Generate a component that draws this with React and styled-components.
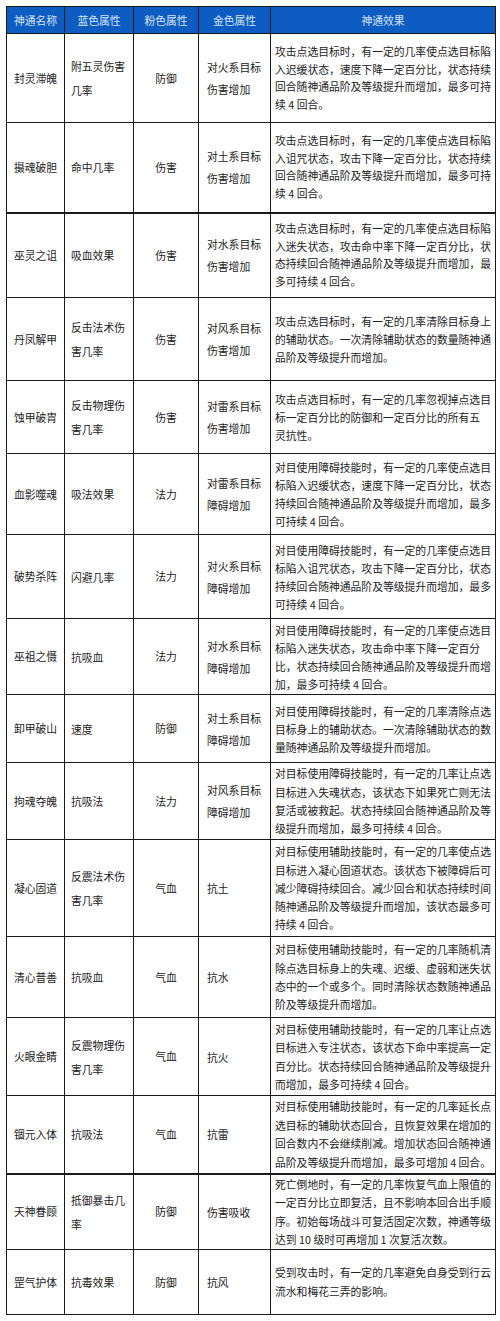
import React from "react";
import styled, { createGlobalStyle } from "styled-components";

const GlobalStyle = createGlobalStyle`
  html, body {
    margin: 0;
    padding: 0;
    background: #ffffff;
  }
  body {
    padding: 6px 0 0 6px;
    font-family: "Noto Sans CJK SC", "Noto Sans", sans-serif;
  }
`;

const Table = styled.table`
  width: 489px;
  table-layout: fixed;
  border-collapse: collapse;
  border: 1.5px solid #1a1a1a;
  color: #222;
  font-size: 10.8px;
`;

const HeadCell = styled.th`
  height: 26px;
  padding: 0;
  background: #0d5cc2;
  color: #d6e4f7;
  font-weight: normal;
  text-align: center;
  border: 1px solid #1a1a1a;
  font-size: 10.8px;
`;

const Row = styled.tr`
  height: ${(p) => p.$h}px;
  border-top: ${(p) => (p.$thick ? 2 : 1)}px solid #1a1a1a;
`;

const Cell = styled.td`
  padding: 0 ${(p) => (p.$center ? 0 : p.$pad)}px;
  text-align: ${(p) => (p.$center ? "center" : "left")};
  vertical-align: middle;
  border-left: 1px solid #1a1a1a;
  border-right: 1px solid #1a1a1a;
  white-space: pre;
  line-height: ${(p) => p.$lh || 19}px;
  overflow: hidden;
`;

const rows = [
  { h: 89, name: "封灵滞魄", blue: "附五灵伤害\n几率", pink: "防御", gold: "对火系目标\n伤害增加", lh: 17.5,
    text: "攻击点选目标时，有一定的几率使点选目标陷\n入迟缓状态，速度下降一定百分比，状态持续\n回合随神通品阶及等级提升而增加，最多可持\n续 4 回合。" },
  { h: 90, name: "摄魂破胆", blue: "命中几率", pink: "伤害", gold: "对土系目标\n伤害增加", lh: 17.5,
    text: "攻击点选目标时，有一定的几率使点选目标陷\n入诅咒状态，攻击下降一定百分比，状态持续\n回合随神通品阶及等级提升而增加，最多可持\n续 4 回合。" },
  { h: 85, name: "巫灵之诅", blue: "吸血效果", pink: "伤害", gold: "对水系目标\n伤害增加", lh: 17.5, thick: true,
    text: "攻击点选目标时，有一定的几率使点选目标陷\n入迷失状态，攻击命中率下降一定百分比，状\n态持续回合随神通品阶及等级提升而增加，最\n多可持续 4 回合。" },
  { h: 83, name: "丹凤解甲", blue: "反击法术伤\n害几率", pink: "伤害", gold: "对风系目标\n伤害增加", lh: 18,
    text: "攻击点选目标时，有一定的几率清除目标身上\n的辅助状态。一次清除辅助状态的数量随神通\n品阶及等级提升而增加。" },
  { h: 73, name: "蚀甲破胄", blue: "反击物理伤\n害几率", pink: "伤害", gold: "对雷系目标\n伤害增加", lh: 18,
    text: "攻击点选目标时，有一定的几率忽视掉点选目\n标一定百分比的防御和一定百分比的所有五\n灵抗性。" },
  { h: 81, name: "血影噬魂", blue: "吸法效果", pink: "法力", gold: "对雷系目标\n障碍增加", lh: 18,
    text: "对目使用障碍技能时，有一定的几率使点选目\n标陷入迟缓状态，速度下降一定百分比，状态\n持续回合随神通品阶及等级提升而增加，最多\n可持续 4 回合。" },
  { h: 84, name: "破势杀阵", blue: "闪避几率", pink: "法力", gold: "对火系目标\n障碍增加", lh: 18,
    text: "对目使用障碍技能时，有一定的几率使点选目\n标陷入诅咒状态，攻击下降一定百分比，状态\n持续回合随神通品阶及等级提升而增加，最多\n可持续 4 回合。" },
  { h: 76, name: "巫祖之慑", blue: "抗吸血", pink: "法力", gold: "对水系目标\n障碍增加", lh: 18,
    text: "对目使用障碍技能时，有一定的几率使点选目\n标陷入迷失状态，攻击命中率下降一定百分\n比，状态持续回合随神通品阶及等级提升而增\n加，最多可持续 4 回合。" },
  { h: 68, name: "卸甲破山", blue: "速度", pink: "防御", gold: "对土系目标\n障碍增加", lh: 18,
    text: "对目使用障碍技能时，有一定的几率清除点选\n目标身上的辅助状态。一次清除辅助状态的数\n量随神通品阶及等级提升而增加。" },
  { h: 77, name: "拘魂夺魄", blue: "抗吸法", pink: "法力", gold: "对风系目标\n障碍增加", lh: 18.3,
    text: "对目标使用障碍技能时，有一定的几率让点选\n目标进入失魂状态，该状态下如果死亡则无法\n复活或被救起。状态持续回合随神通品阶及等\n级提升而增加，最多可持续 4 回合。" },
  { h: 97, name: "凝心固道", blue: "反震法术伤\n害几率", pink: "气血", gold: "抗土", lh: 18.3,
    text: "对目标使用辅助技能时，有一定的几率使点选\n目标进入凝心固道状态。该状态下被障碍后可\n减少障碍持续回合。减少回合和状态持续时间\n随神通品阶及等级提升而增加，该状态最多可\n持续 4 回合。" },
  { h: 81, name: "清心普善", blue: "抗吸血", pink: "气血", gold: "抗水", lh: 18.3,
    text: "对目标使用辅助技能时，有一定的几率随机清\n除点选目标身上的失魂、迟缓、虚弱和迷失状\n态中的一个或多个。同时清除状态数随神通品\n阶及等级提升而增加。" },
  { h: 78, name: "火眼金睛", blue: "反震物理伤\n害几率", pink: "气血", gold: "抗火", lh: 18.5,
    text: "对目标使用辅助技能时，有一定的几率让点选\n目标进入专注状态，该状态下命中率提高一定\n百分比。状态持续回合随神通品阶及等级提升\n而增加，最多可持续 4 回合。" },
  { h: 78, name: "锢元入体", blue: "抗吸法", pink: "气血", gold: "抗雷", lh: 18.5,
    text: "对目标使用辅助技能时，有一定的几率延长点\n选目标的辅助状态回合，且恢复效果在增加的\n回合数内不会继续削减。增加状态回合随神通\n品阶及等级提升而增加，最多可增加 4 回合。" },
  { h: 76, name: "天神眷顾", blue: "抵御暴击几\n率", pink: "防御", gold: "伤害吸收", lh: 18.5, thick: true,
    text: "死亡倒地时，有一定的几率恢复气血上限值的\n一定百分比立即复活，且不影响本回合出手顺\n序。初始每场战斗可复活固定次数，神通等级\n达到 10 级时可再增加 1 次复活次数。" },
  { h: 65, name: "罡气护体", blue: "抗毒效果", pink: "防御", gold: "抗风", lh: 19,
    text: "受到攻击时，有一定的几率避免自身受到行云\n流水和梅花三弄的影响。" },
];

export default function App() {
  return (
    <>
      <GlobalStyle />
      <Table>
        <colgroup>
          <col style={{ width: 58 }} />
          <col style={{ width: 69 }} />
          <col style={{ width: 65 }} />
          <col style={{ width: 72 }} />
          <col style={{ width: 225 }} />
        </colgroup>
        <thead>
          <tr>
            <HeadCell>神通名称</HeadCell>
            <HeadCell>蓝色属性</HeadCell>
            <HeadCell>粉色属性</HeadCell>
            <HeadCell>金色属性</HeadCell>
            <HeadCell>神通效果</HeadCell>
          </tr>
        </thead>
        <tbody>
          {rows.map((r) => (
            <Row key={r.name} $h={r.h} $thick={r.thick}>
              <Cell $center>{r.name}</Cell>
              <Cell $pad={6} $lh={24}>{r.blue}</Cell>
              <Cell $center>{r.pink}</Cell>
              <Cell $pad={8} $lh={22}>{r.gold}</Cell>
              <Cell $pad={4} $lh={r.lh}>{r.text}</Cell>
            </Row>
          ))}
        </tbody>
      </Table>
    </>
  );
}
